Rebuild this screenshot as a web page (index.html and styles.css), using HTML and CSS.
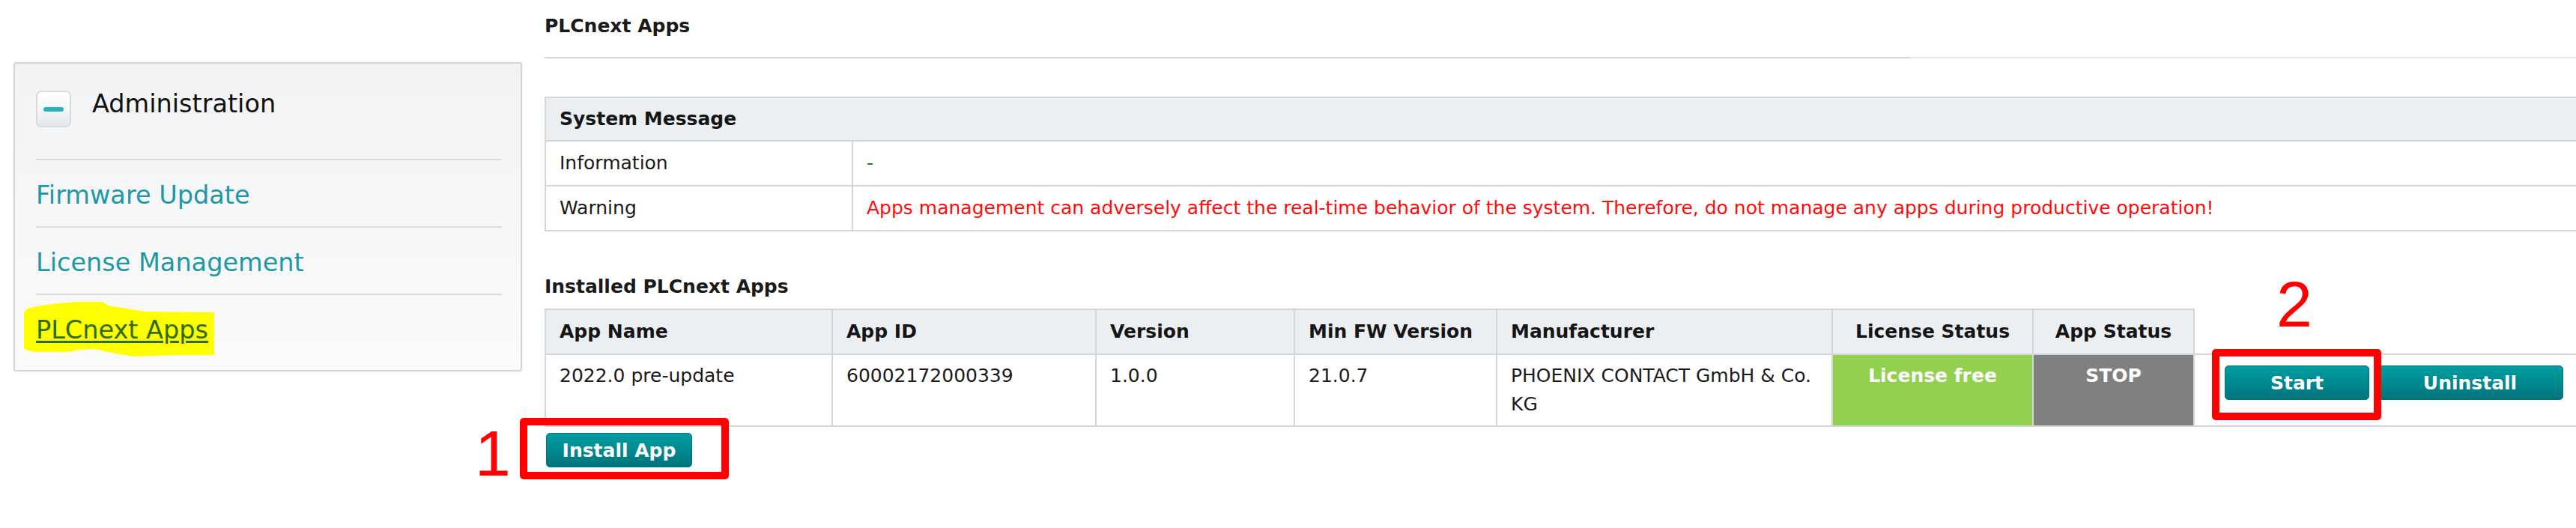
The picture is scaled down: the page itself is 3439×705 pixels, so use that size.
FILE: index.html
```html
<!DOCTYPE html>
<html lang="en">
<head>
<meta charset="utf-8">
<title>PLCnext Apps</title>
<link rel="stylesheet" href="styles.css">
</head>
<body>
<div class="page">
  <aside class="sidebar">
    <div class="nav-box">
      <div class="nav-head">
        <span class="toggle"><span class="toggle-bar"></span></span>
        <span class="nav-title">Administration</span>
      </div>
      <ul class="nav-list">
        <li class="nav-item"><a class="nav-link" href="#">Firmware Update</a></li>
        <li class="nav-item"><a class="nav-link" href="#">License Management</a></li>
        <li class="nav-item nav-item-last">
          <svg class="marker" width="258" height="76" viewBox="0 0 258 76" aria-hidden="true">
            <polygon points="2,16 6,10 15,8 30,5 70,1 107,1 115,6 140,10 163,14 256,15 256,72 210,72 148,74 125,70 95,64 75,65 60,68 15,68 2,64" fill="#ffff00"/>
          </svg>
          <a class="nav-link nav-current" href="#">PLCnext Apps</a>
        </li>
      </ul>
    </div>
  </aside>

  <main class="content">
    <h1 class="page-title">PLCnext Apps</h1>
    <div class="rule"></div>

    <table class="grid msg-table">
      <colgroup>
        <col class="c-label">
        <col class="c-value">
      </colgroup>
      <thead>
        <tr><th colspan="2">System Message</th></tr>
      </thead>
      <tbody>
        <tr><td>Information</td><td class="msg-info">-</td></tr>
        <tr><td>Warning</td><td class="msg-warn">Apps management can adversely affect the real-time behavior of the system. Therefore, do not manage any apps during productive operation!</td></tr>
      </tbody>
    </table>

    <h2 class="section-title">Installed PLCnext Apps</h2>

    <table class="grid apps-table">
      <colgroup>
        <col class="c-name">
        <col class="c-id">
        <col class="c-ver">
        <col class="c-fw">
        <col class="c-man">
        <col class="c-lic">
        <col class="c-stat">
        <col class="c-act">
      </colgroup>
      <thead>
        <tr>
          <th>App Name</th>
          <th>App ID</th>
          <th>Version</th>
          <th>Min FW Version</th>
          <th>Manufacturer</th>
          <th class="th-center">License Status</th>
          <th class="th-center">App Status</th>
          <th class="th-blank"></th>
        </tr>
      </thead>
      <tbody>
        <tr>
          <td>2022.0 pre-update</td>
          <td>60002172000339</td>
          <td>1.0.0</td>
          <td>21.0.7</td>
          <td class="td-man">PHOENIX CONTACT GmbH &amp; Co. KG</td>
          <td class="status status-free">License free</td>
          <td class="status status-stop">STOP</td>
          <td class="td-actions">
            <div class="actions">
              <button class="btn btn-start" type="button">Start</button>
              <button class="btn btn-uninstall" type="button">Uninstall</button>
            </div>
          </td>
        </tr>
      </tbody>
    </table>

    <div class="install-row">
      <button class="btn btn-install" type="button">Install App</button>
    </div>
  </main>

  <div class="callout callout-1"></div>
  <div class="callout callout-2"></div>
  <span class="callout-num num-1">1</span>
  <span class="callout-num num-2">2</span>
</div>
</body>
</html>
```

FILE: styles.css
```css
html, body {
  margin: 0;
  padding: 0;
  background: #ffffff;
  overflow: hidden;
}

body {
  font-family: "DejaVu Sans", Verdana, sans-serif;
  color: #1a1a1a;
}

.page {
  position: relative;
  display: flex;
  align-items: flex-start;
  width: 3439px;
  height: 705px;
}

/* ---------- sidebar ---------- */
.sidebar {
  flex: none;
  width: 679px;
  margin: 83px 0 0 18px;
}

.nav-box {
  box-sizing: border-box;
  height: 413px;
  padding: 34px 25px 0 28px;
  border: 2px solid #d3d5d8;
  border-radius: 3px;
  background: linear-gradient(#f2f3f5, #fbfbfc);
  box-shadow: 0 0 2px rgba(0, 0, 0, 0.08);
}

.nav-head {
  display: flex;
  align-items: flex-start;
  gap: 28px;
  padding-bottom: 42px;
  border-bottom: 2px solid #d9dbdd;
}

.toggle {
  box-sizing: border-box;
  flex: none;
  display: flex;
  align-items: center;
  justify-content: center;
  width: 47px;
  height: 49px;
  margin-top: 2px;
  border: 2px solid #d9dcdf;
  border-radius: 7px;
  background: linear-gradient(#ffffff, #f3f5f6 55%, #e2e7ea);
}

.toggle-bar {
  display: block;
  width: 27px;
  height: 6px;
  border-radius: 3px;
  background: #2ab3b7;
}

.nav-title {
  font-size: 33.5px;
  line-height: 40px;
  color: #111111;
}

.nav-list {
  list-style: none;
  margin: 0;
  padding: 0;
}

.nav-item {
  position: relative;
  padding: 27px 0 21px;
  border-bottom: 2px solid #d9dbdd;
  font-size: 33.5px;
  line-height: 40px;
}

.nav-item-last {
  border-bottom: none;
}

.nav-link {
  position: relative;
  color: #1d98a4;
  text-decoration: none;
}

.nav-current {
  color: #2c6c00;
  text-decoration: underline;
  text-decoration-thickness: 3px;
  text-underline-offset: 3px;
}

.marker {
  position: absolute;
  left: -18px;
  top: 8px;
}

/* ---------- main content ---------- */
.content {
  flex: none;
  width: 2800px;
  margin-left: 30px;
  font-size: 25px;
  line-height: 38px;
}

.page-title {
  margin: 0;
  padding-top: 16px;
  font-size: 25px;
  line-height: 38px;
  font-weight: bold;
}

.rule {
  height: 2px;
  margin-top: 22px;
  background: linear-gradient(to right, #d3d6d9 1823px, #e7e9eb 1823px);
}

.grid {
  width: 2800px;
  table-layout: fixed;
  border-collapse: collapse;
}

.grid th,
.grid td {
  border: 2px solid #d3d6d9;
  text-align: left;
  font-size: 25px;
  line-height: 38px;
}

.grid th {
  background: #eceff2;
  font-weight: bold;
  color: #151515;
}

.msg-table {
  margin-top: 51px;
}

.msg-table th {
  padding: 9px 18px;
}

.msg-table td {
  padding: 10px 18px;
}

.c-label { width: 410px; }

.msg-info { color: #118811; }
.msg-warn { color: #ff0d0d; }

.section-title {
  margin: 55px 0 10px;
  font-size: 25px;
  line-height: 38px;
  font-weight: bold;
}

.apps-table th {
  padding: 10px 18px;
  vertical-align: middle;
}

.apps-table td {
  padding: 9px 18px;
  vertical-align: top;
}

.c-name { width: 383px; }
.c-id { width: 352px; }
.c-ver { width: 265px; }
.c-fw { width: 270px; }
.c-man { width: 448px; }
.c-lic { width: 268px; }
.c-stat { width: 215px; }

.apps-table .th-center {
  text-align: center;
  padding-left: 8px;
  padding-right: 8px;
}

.apps-table .th-blank {
  background: transparent;
  border-top-style: hidden;
  border-right-style: hidden;
}

.apps-table .td-man {
  padding-right: 10px;
}

.apps-table .status {
  text-align: center;
  font-weight: bold;
  color: #ffffff;
  padding-left: 8px;
  padding-right: 8px;
}

.status-free { background: #92d050; }
.status-stop { background: #808080; }

.apps-table .td-actions {
  padding: 14px 0 0 40px;
}

.actions {
  display: flex;
  gap: 10px;
}

.btn {
  box-sizing: border-box;
  height: 46px;
  padding: 0 19px;
  border: 1px solid #00767c;
  border-radius: 5px;
  background: linear-gradient(#009ca2, #008a90 50%, #00737a);
  color: #ffffff;
  font-family: "DejaVu Sans", Verdana, sans-serif;
  font-size: 25px;
  font-weight: bold;
  line-height: 43px;
  text-align: center;
}

.btn-start { width: 193px; }
.btn-uninstall { width: 249px; }

.install-row {
  padding: 8px 0 0 2px;
}

.btn-install {
  width: 195px;
}

/* ---------- annotations ---------- */
.callout {
  position: absolute;
  box-sizing: border-box;
  border: 10px solid #ff0000;
  border-radius: 5px;
}

.callout-1 {
  left: 694px;
  top: 558px;
  width: 279px;
  height: 82px;
}

.callout-2 {
  left: 2953px;
  top: 466px;
  width: 226px;
  height: 95px;
}

.callout-num {
  position: absolute;
  font-family: "Liberation Sans", Arial, sans-serif;
  font-size: 86px;
  line-height: 86px;
  color: #ff0000;
}

.num-1 {
  left: 634px;
  top: 562px;
}

.num-2 {
  left: 3039px;
  top: 363px;
}
```
